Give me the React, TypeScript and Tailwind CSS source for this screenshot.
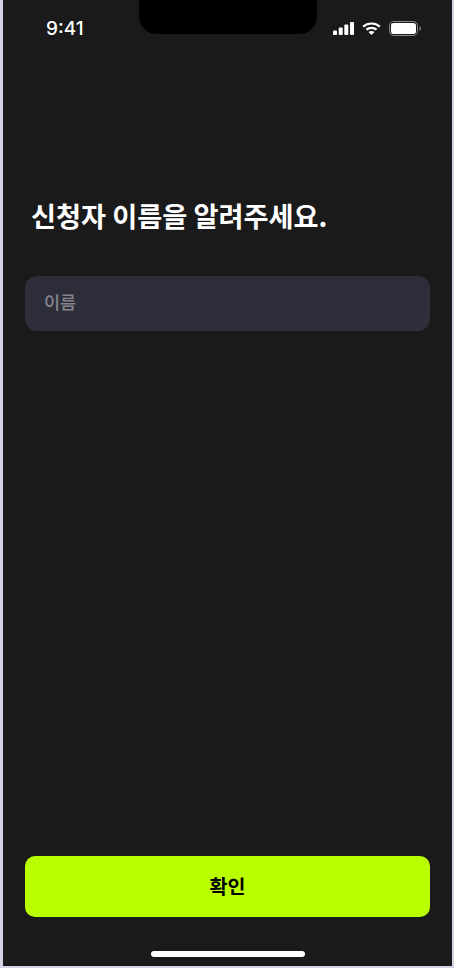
const FONT = "font-['Noto_Sans_CJK_KR','Noto_Sans',sans-serif]";

function StatusIcons() {
  return (
    <div className="flex items-center gap-[8px]">
      <svg width="21" height="13" viewBox="0 0 21 13" fill="#fff">
        <rect x="0" y="8.5" width="4" height="4.5" rx="1" />
        <rect x="5.7" y="5.5" width="4" height="7.5" rx="1" />
        <rect x="11.3" y="2.5" width="4" height="10.5" rx="1" />
        <rect x="17" y="0" width="4" height="13" rx="1" />
      </svg>
      <svg width="19" height="13" viewBox="0 0 20 14" fill="none" stroke="#fff" strokeWidth="2.4">
        <path d="M1 5 C6 0.5 14 0.5 19 5" />
        <path d="M4.5 8.2 C7.5 5.6 12.5 5.6 15.5 8.2" />
        <path d="M10 14 L6.8 10.8 C8.6 9.4 11.4 9.4 13.2 10.8 Z" fill="#fff" stroke="none" />
      </svg>
      <svg width="32" height="15" viewBox="0 0 32 15" fill="none">
        <rect x="0.5" y="0.5" width="28" height="14" rx="4.2" stroke="#8a8a8a" />
        <rect x="2" y="2" width="25" height="11" rx="2.8" fill="#fff" />
        <path d="M30.5 5 C31.4 5.4 32 6.3 32 7.5 C32 8.7 31.4 9.6 30.5 10 Z" fill="#8a8a8a" />
      </svg>
    </div>
  );
}

export default function App() {
  return (
    <div className={`h-[968px] w-[454px] bg-[#d3d3e6] pl-[3px] pr-[2px] pb-[2px] ${FONT}`}>
      <div className="flex h-full flex-col bg-[#1a1a1a]">
        <div className="flex h-[34px] items-start">
          <span className="mt-[17px] ml-[43px] w-[93px] text-[19px] leading-[24px] font-medium text-white font-['Inter',sans-serif]">
            9:41
          </span>
          <div className="h-[34px] w-[178px] rounded-b-[18px] bg-black" />
          <div className="mt-[21px] ml-[16px]">
            <StatusIcons />
          </div>
        </div>

        <h1 className="mt-[162px] ml-[28px] text-[27.2px] leading-[38px] font-bold text-white">
          신청자 이름을 알려주세요.
        </h1>

        <div className="mt-[42px] mx-[22px] flex h-[55px] items-center rounded-[12px] bg-[#2e2e3a] px-[19px]">
          <span className="mb-[3px] text-[17.5px] font-medium text-[#85858c]">이름</span>
        </div>

        <div className="flex-1" />

        <button className="mx-[22px] flex h-[61px] items-center justify-center rounded-[10px] bg-[#b9ff00] pb-[2px] text-[19.5px] font-semibold text-black">
          확인
        </button>

        <div className="mt-[34px] mb-[9px] h-[6px] w-[154px] self-center rounded-full bg-white" />
      </div>
    </div>
  );
}
